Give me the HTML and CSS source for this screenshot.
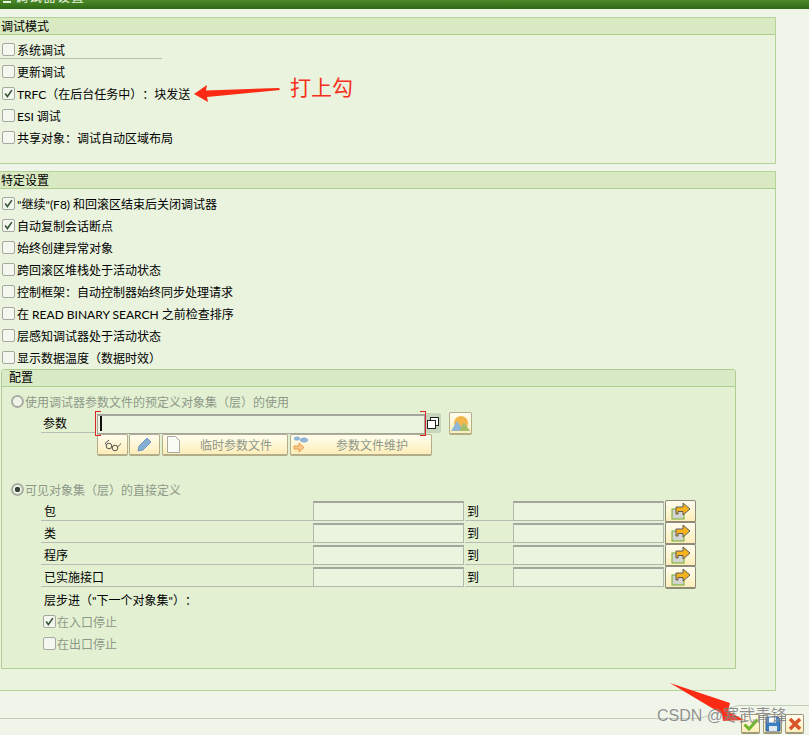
FILE: index.html
```html
<!DOCTYPE html>
<html lang="zh-CN">
<head>
    <meta charset="UTF-8">
    <title>调试器设置</title>
    <link rel="stylesheet" href="styles.css">
</head>
<body>
<svg class="defs" width="0" height="0">
    <symbol id="i-check" viewBox="0 0 13 13"><path d="M2.5 6.5 5.2 10 10.5 2.5" fill="none" stroke="#3f5a3a" stroke-width="2"/></symbol>
    <symbol id="i-arrow" viewBox="0 0 22 18">
        <rect x="2" y="7" width="12" height="10" fill="#d4d4d0" stroke="#6fae2a"/>
        <path d="M6 5h7V1l7 6-7 6V9.500H8V12H6z" fill="#f7b21c" stroke="#5c5c5c" stroke-width="1"/>
    </symbol>
</svg>

<div class="titlebar"><span class="title-icon"></span><span class="title-text">调试器设置</span></div>

<div class="page">
    <section class="group">
        <h2 class="group-head">调试模式</h2>
        <div class="group-body mode-body">
            <div class="row"><label class="check-label line"><span class="cb"></span>系统调试</label></div>
            <div class="row"><label class="check-label"><span class="cb"></span>更新调试</label></div>
            <div class="row"><label class="check-label"><span class="cb"><svg><use href="#i-check"/></svg></span>TRFC（在后台任务中）：块发送</label></div>
            <div class="row"><label class="check-label"><span class="cb"></span>ESI 调试</label></div>
            <div class="row"><label class="check-label"><span class="cb"></span>共享对象：调试自动区域布局</label></div>
        </div>
    </section>

    <section class="group group-second">
        <h2 class="group-head">特定设置</h2>
        <div class="group-body settings-body">
            <div class="row"><label class="check-label"><span class="cb"><svg><use href="#i-check"/></svg></span>"继续"(F8) 和回滚区结束后关闭调试器</label></div>
            <div class="row"><label class="check-label"><span class="cb"><svg><use href="#i-check"/></svg></span>自动复制会话断点</label></div>
            <div class="row"><label class="check-label"><span class="cb"></span>始终创建异常对象</label></div>
            <div class="row"><label class="check-label"><span class="cb"></span>跨回滚区堆栈处于活动状态</label></div>
            <div class="row"><label class="check-label"><span class="cb"></span>控制框架：自动控制器始终同步处理请求</label></div>
            <div class="row"><label class="check-label"><span class="cb"></span>在 READ BINARY SEARCH 之前检查排序</label></div>
            <div class="row"><label class="check-label"><span class="cb"></span>层感知调试器处于活动状态</label></div>
            <div class="row"><label class="check-label"><span class="cb"></span>显示数据温度（数据时效）</label></div>

            <section class="config">
                <h3 class="config-head">配置</h3>
                <div class="config-body">
                    <div class="row radio-row disabled"><span class="radio"></span>使用调试器参数文件的预定义对象集（层）的使用</div>

                    <div class="row field-row">
                        <span class="param-label">参数</span>
                        <div class="param-input"><span class="caret"></span></div>
                        <button class="copy-btn">
                            <svg width="14" height="14" viewBox="0 0 14 14"><rect x="4.500" y="1.500" width="8" height="8" fill="#fff" stroke="#222"/><rect x="1.500" y="4.500" width="8" height="8" fill="#fff" stroke="#222"/></svg>
                        </button>
                        <button class="btn img-btn">
                            <svg width="19" height="17" viewBox="0 0 19 17">
                                <circle cx="10" cy="8" r="7" fill="#f2b84e"/>
                                <path d="M0 16 6 6l4 6 3-4 6 8z" fill="#8fb8d8"/>
                                <path d="M8 16l5-8 6 8z" fill="#a3bf6a"/>
                            </svg>
                        </button>
                    </div>

                    <div class="toolbar">
                        <button class="btn tool-glasses">
                            <svg width="18" height="14" viewBox="0 0 18 14" fill="none" stroke="#555"><circle cx="5" cy="8" r="2.800"/><circle cx="11" cy="10" r="2.800"/><path d="M2.500 6.500 1 5.500 5 2M7.700 8.800h.6M13.500 9c1 0 1.500-2 3.500-3.500"/></svg>
                        </button>
                        <button class="btn tool-pencil">
                            <svg width="15" height="15" viewBox="0 0 15 15"><path d="M1 14 2 9 10 1l4 4-8 8z" fill="#85aed3" stroke="#6d98c0"/></svg>
                        </button>
                        <button class="btn tool-text tool-temp">
                            <svg width="13" height="17" viewBox="0 0 13 17"><path d="M.5.500h8l4 4v12H.5z" fill="#fbfbf6" stroke="#a8a8a0"/></svg>
                            <span>临时参数文件</span>
                        </button>
                        <button class="btn tool-text tool-maint">
                            <svg width="16" height="17" viewBox="0 0 16 17"><ellipse cx="4" cy="2.500" rx="3" ry="2" fill="#8fb4d6"/><ellipse cx="11" cy="4" rx="4" ry="2.500" fill="#8fb4d6"/><path d="M1 10h5V7l5 4.500-5 4.500v-3H1z" fill="#f8c98a" stroke="#e79a4a"/></svg>
                            <span>参数文件维护</span>
                        </button>
                    </div>

                    <div class="row radio-row disabled direct-row"><span class="radio on"></span>可见对象集（层）的直接定义</div>

                    <div class="row field-row">
                        <span class="field-label">包</span><span class="field-input"></span><span class="field-to">到</span><span class="field-input"></span>
                        <button class="btn arrow-btn"><svg width="22" height="18"><use href="#i-arrow"/></svg></button>
                    </div>
                    <div class="row field-row">
                        <span class="field-label">类</span><span class="field-input"></span><span class="field-to">到</span><span class="field-input"></span>
                        <button class="btn arrow-btn"><svg width="22" height="18"><use href="#i-arrow"/></svg></button>
                    </div>
                    <div class="row field-row">
                        <span class="field-label">程序</span><span class="field-input"></span><span class="field-to">到</span><span class="field-input"></span>
                        <button class="btn arrow-btn"><svg width="22" height="18"><use href="#i-arrow"/></svg></button>
                    </div>
                    <div class="row field-row">
                        <span class="field-label">已实施接口</span><span class="field-input"></span><span class="field-to">到</span><span class="field-input"></span>
                        <button class="btn arrow-btn"><svg width="22" height="18"><use href="#i-arrow"/></svg></button>
                    </div>

                    <div class="row step-row">层步进（"下一个对象集"）：</div>
                    <div class="row step-row disabled"><label class="check-label"><span class="cb"><svg><use href="#i-check"/></svg></span>在入口停止</label></div>
                    <div class="row step-row disabled"><label class="check-label"><span class="cb"></span>在出口停止</label></div>
                </div>
            </section>
        </div>
    </section>

    <footer class="footer">
        <button class="btn foot-btn">
            <svg width="16" height="14" viewBox="0 0 16 14"><path d="M1.500 7.500 6 12 14.500 2.500" fill="none" stroke="#6fb52c" stroke-width="3"/></svg>
        </button>
        <button class="btn foot-btn">
            <svg width="16" height="16" viewBox="0 0 16 16"><path d="M1 1h12l2 2v12H1z" fill="#3f7fc0" stroke="#2c5f98"/><rect x="4" y="1.500" width="7" height="5" fill="#fff"/><rect x="4" y="10" width="8" height="5" fill="#dfe9f3"/></svg>
        </button>
        <button class="btn foot-btn">
            <svg width="14" height="14" viewBox="0 0 14 14"><path d="M2 2 12 12M12 2 2 12" stroke="#d9542b" stroke-width="3.500"/></svg>
        </button>
    </footer>
</div>

<svg class="footer-lines" width="809" height="735">
    <path d="M0 718.500H700L738 705.500H809" fill="none" stroke="#c3cbbb"/>
</svg>

<svg class="annot" width="809" height="735">
    <path d="M194 94 207 85 206 90.500 279 88 280 90 207 97 208 102z" fill="#fb2a14"/>
    <path d="M670 683 730 703 728 711 744 720 723 721 722 714z" fill="#fb2a14"/>
</svg>
<div class="annot-text">打上勾</div>
<div class="watermark">CSDN @寒武青锋</div>
</body>
</html>
```

FILE: styles.css
```css
*{
    margin: 0;
    padding: 0;
    box-sizing: border-box;
}
body{
    position: relative;
    width: 809px;
    height: 735px;
    overflow: hidden;
    background: #f0f5ea;
    color: #000;
    font-family: Lato, "Noto Sans CJK SC", sans-serif;
    font-size: 12px;
    text-spacing-trim: space-all;
}
.defs{
    position: absolute;
}
.titlebar{
    display: flex;
    align-items: flex-end;
    height: 9px;
    padding-left: 3px;
    overflow: hidden;
    background: linear-gradient(#4b8a2b, #2f6a14);
    color: #e8f2df;
}
.title-icon{
    flex: none;
    width: 8px;
    height: 2px;
    margin-bottom: 6px;
    background: #e8f2df;
}
.title-text{
    flex: none;
    margin-left: 4px;
    margin-bottom: 5px;
    line-height: 16px;
    font-size: 13px;
    letter-spacing: 1px;
}
.page{
    padding-top: 8px;
}
.group{
    width: 776px;
    border: 1px solid #b5d399;
    border-left: none;
    background: #e9f3dd;
}
.group-second{
    margin-top: 7px;
}
.group-head{
    height: 17px;
    padding-left: 1px;
    border-bottom: 1px solid #aecd8f;
    background: #d9e9c2;
    font-size: 12px;
    font-weight: normal;
    line-height: 18px;
}
.mode-body{
    padding: 3px 0 15px;
}
.settings-body{
    padding: 3px 0 21px;
}
.row{
    display: flex;
    height: 22px;
}
.check-label{
    display: flex;
    align-items: center;
    gap: 2px;
    height: 22px;
    padding-left: 2px;
    white-space: nowrap;
}
.line{
    height: 21px;
    width: 162px;
    padding-top: 2px;
    border-bottom: 1px solid #b9bcb3;
}
.cb{
    flex: none;
    width: 13px;
    height: 13px;
    border: 1px solid #a5a9a0;
    border-radius: 2px;
    background: #f4f7f0;
}
.cb svg{
    display: block;
    width: 11px;
    height: 11px;
}
.config{
    width: 735px;
    height: 300px;
    margin: 1px 0 0 1px;
    border: 1px solid #aecd8f;
    border-radius: 3px 3px 0 0;
    background: #e3f1d2;
}
.config-head{
    height: 17px;
    padding-left: 7px;
    border-bottom: 1px solid #aecd8f;
    background: #d9eac6;
    font-size: 12px;
    font-weight: normal;
    line-height: 16px;
}
.config-body{
    padding-top: 3px;
}
.disabled{
    color: #8e9889;
}
.radio-row{
    align-items: center;
    gap: 1px;
    padding-left: 9px;
}
.direct-row{
    margin-top: 22px;
}
.radio{
    flex: none;
    width: 13px;
    height: 13px;
    border: 2px solid #a9ada4;
    border-radius: 50%;
    background: #eef4e6;
}
.radio.on{
    background: radial-gradient(circle, #39443a 0 2.500px, #eef4e6 3px);
}
.field-row{
    padding-left: 39px;
}
.param-label{
    width: 55px;
    height: 21px;
    padding-left: 2px;
    border-bottom: 1px solid #b9bcb3;
    line-height: 24px;
}
.param-input{
    position: relative;
    width: 328px;
    height: 20px;
    margin: 2px 0 0 1px;
    border: 1px solid #a3a69e;
    border-top-width: 2px;
    background: #ebf4df;
}
.param-input::before,
.param-input::after{
    content: "";
    position: absolute;
    top: -5px;
    bottom: -3px;
    width: 5px;
    border: 1px solid #d8232a;
}
.param-input::before{
    left: -3px;
    border-right: none;
}
.param-input::after{
    right: -2px;
    border-left: none;
}
.caret{
    display: block;
    width: 2px;
    height: 15px;
    margin-left: 2px;
    background: #111;
}
.copy-btn{
    display: flex;
    align-items: center;
    justify-content: center;
    width: 16px;
    height: 20px;
    margin-top: 1px;
    border: none;
    border-radius: 2px;
    background: #c8d5bd;
}
.btn{
    display: flex;
    align-items: center;
    justify-content: center;
    border: 1px solid #b3ad8a;
    border-bottom-width: 2px;
    border-radius: 2px;
    background: linear-gradient(#fffdf0, #fdeeb9);
    font-family: inherit;
    font-size: 12px;
    color: inherit;
}
.img-btn{
    width: 23px;
    height: 23px;
    margin-left: 8px;
}
.toolbar{
    display: flex;
    gap: 1px;
    height: 22px;
    padding-left: 95px;
}
.tool-glasses{
    width: 31px;
}
.tool-pencil{
    width: 31px;
}
.tool-text{
    justify-content: flex-start;
    padding-left: 4px;
    color: #8e9889;
}
.tool-temp{
    width: 126px;
    margin-left: 1px;
}
.tool-temp span{
    margin-left: 20px;
}
.tool-maint{
    width: 142px;
    margin-left: 1px;
    padding-left: 2px;
}
.tool-maint span{
    margin-left: 27px;
}
.field-label{
    width: 272px;
    height: 21px;
    padding-left: 3px;
    border-bottom: 1px solid #b9bcb3;
    line-height: 24px;
}
.field-input{
    width: 151px;
    height: 20px;
    margin-top: 1px;
    border: 1px solid #b3b6ad;
    border-top: 2px solid #a3a69e;
    background: #ebf4df;
}
.field-to{
    width: 48px;
    height: 21px;
    margin-left: 1px;
    padding-left: 2px;
    border-bottom: 1px solid #b9bcb3;
    line-height: 24px;
}
.arrow-btn{
    width: 31px;
    height: 23px;
    margin-left: 1px;
    border-color: #8d8a78;
}
.step-row{
    align-items: center;
    padding-left: 42px;
}
.step-row .check-label{
    gap: 1px;
    margin-left: -1px;
    padding-left: 0;
}
.footer{
    display: flex;
    justify-content: flex-end;
    gap: 3px;
    height: 44px;
    padding: 23px 5px 0 0;
}
.foot-btn{
    position: relative;
    width: 19px;
    height: 20px;
    border-color: #a09a78;
}
.footer-lines{
    position: absolute;
    top: 0;
    left: 0;
    z-index: -1;
}
.annot{
    position: absolute;
    top: 0;
    left: 0;
    pointer-events: none;
}
.annot-text{
    position: absolute;
    top: 73px;
    left: 290px;
    color: #f5301c;
    font-size: 21px;
    line-height: 28px;
}
.watermark{
    position: absolute;
    top: 704px;
    left: 657px;
    color: rgba(70, 70, 70, 0.6);
    font-family: "Liberation Sans", "Noto Sans CJK SC", sans-serif;
    font-size: 16px;
    line-height: 24px;
    white-space: nowrap;
    text-shadow: 0 0 1px rgba(255, 255, 255, 0.7);
}
```
